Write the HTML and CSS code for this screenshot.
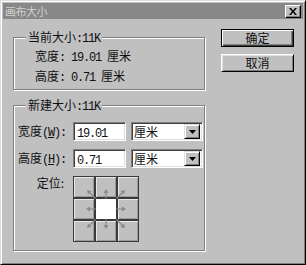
FILE: index.html
```html
<!DOCTYPE html>
<html>
<head>
  <title>画布大小</title>
  <link rel="stylesheet" href="styles.css">
</head>
<body>

  <div class="window">
    <div class="titlebar">
      <span class="title">画布大小</span>
      <span class="close">
        <svg width="8" height="7" viewBox="0 0 8 7"><path d="M0 0h2l2 2.5L6 0h2L5 3.5 8 7H6L4 4.5 2 7H0l3-3.5z" fill="#000"/></svg>
      </span>
    </div>

    <div class="main">
      <div class="groups">
        <div class="group current">
          <span class="legend">当前大小<span class="num">:11K</span></span>
          <div class="line">宽度<span class="num">: 19.01 </span>厘米</div>
          <div class="line">高度<span class="num">: 0.71 </span>厘米</div>
        </div>

        <div class="group newsize">
          <span class="legend">新建大小<span class="num">:11K</span></span>
          <div class="form">
            <label>宽度<span class="num">(<u>W</u>):</span></label>
            <div class="field"><span class="num">19.01</span></div>
            <div class="select"><span class="value">厘米</span><span class="drop"><svg width="7" height="4" viewBox="0 0 7 4"><path d="M0 0h7L3.5 4z" fill="#000"/></svg></span></div>

            <label>高度<span class="num">(<u>H</u>):</span></label>
            <div class="field"><span class="num">0.71</span></div>
            <div class="select"><span class="value">厘米</span><span class="drop"><svg width="7" height="4" viewBox="0 0 7 4"><path d="M0 0h7L3.5 4z" fill="#000"/></svg></span></div>

            <label class="top">定位:</label>
            <div class="anchor">
              <div class="cell"></div><div class="cell"></div><div class="cell"></div>
              <div class="cell"></div><div class="cell center"></div><div class="cell"></div>
              <div class="cell"></div><div class="cell"></div><div class="cell"></div>
              <svg class="arrows" width="66" height="66" viewBox="0 0 66 66">
                <defs>
                  <g id="up"><path d="M33 22.5V16" stroke="#8a8a8a" stroke-width="1.2"/><path d="M33 13l-2.5 4h5z" fill="#8a8a8a"/></g>
                  <g id="diag"><path d="M22.5 22.5L16 16" stroke="#8a8a8a" stroke-width="1.2"/><path d="M14 14l1 4.5 3.5-3.5z" fill="#8a8a8a"/></g>
                </defs>
                <use href="#up"/>
                <use href="#up" transform="rotate(90 33 33)"/>
                <use href="#up" transform="rotate(180 33 33)"/>
                <use href="#up" transform="rotate(270 33 33)"/>
                <use href="#diag"/>
                <use href="#diag" transform="rotate(90 33 33)"/>
                <use href="#diag" transform="rotate(180 33 33)"/>
                <use href="#diag" transform="rotate(270 33 33)"/>
              </svg>
            </div>
          </div>
        </div>
      </div>

      <div class="buttons">
        <button class="btn default">确定</button>
        <button class="btn">取消</button>
      </div>
    </div>
  </div>

</body>
</html>
```

FILE: styles.css
```css
html, body {
  margin: 0;
  padding: 0;
  background: #c0c0c0;
}
body {
  font-family: "Noto Sans CJK SC", sans-serif;
  font-size: 12px;
  color: #111;
}
.window {
  width: 306px;
  height: 265px;
  box-sizing: border-box;
  border: 1px solid;
  border-color: #dfdfdf #000 #000 #dfdfdf;
  box-shadow: inset 1px 1px #fff, inset -1px -1px #808080;
  padding: 2px;
}
.titlebar {
  height: 16px;
  background: #888;
  display: flex;
  align-items: center;
  justify-content: space-between;
  padding: 0 2px 0 2px;
  color: #d2d2d2;
  line-height: 16px;
}
.title {
  font-size: 11px;
  letter-spacing: -0.5px;
}
.close {
  width: 16px;
  height: 13px;
  box-sizing: border-box;
  background: #c0c0c0;
  border: 1px solid;
  border-color: #fff #000 #000 #fff;
  box-shadow: inset -1px -1px #808080;
  display: flex;
  align-items: center;
  justify-content: center;
}
.main {
  display: flex;
  gap: 16px;
  padding: 10px 0 0 10px;
}
.groups {
  display: flex;
  flex-direction: column;
  gap: 15px;
  padding-top: 8px;
}
.group {
  position: relative;
  width: 192px;
  box-sizing: border-box;
  border: 1px solid #808080;
  box-shadow: inset 1px 1px #fff, 1px 1px #fff;
}
.current {
  height: 53px;
  padding: 9px 0 0 21px;
}
.newsize {
  height: 146px;
  padding: 16px 0 0 4px;
}
.legend {
  position: absolute;
  top: -8px;
  left: 12px;
  padding: 0 2px;
  line-height: 14px;
  background: #c0c0c0;
}
.num {
  font-family: "Liberation Mono", monospace;
  letter-spacing: -1.2px;
}
.line {
  line-height: 17px;
}
.form {
  display: grid;
  grid-template-columns: 50px 53px 72px;
  column-gap: 5px;
  row-gap: 8px;
  align-items: center;
}
.form label {
  white-space: nowrap;
  line-height: 14px;
}
.form label.top {
  align-self: start;
  text-align: right;
  padding-right: 4px;
}
.field {
  height: 19px;
  box-sizing: border-box;
  background: #fff;
  border: 1px solid;
  border-color: #808080 #fff #fff #808080;
  box-shadow: inset 1px 1px #404040, inset -1px -1px #dfdfdf;
  padding: 0 3px;
  line-height: 17px;
}
.select {
  height: 19px;
  box-sizing: border-box;
  background: #fff;
  border: 1px solid;
  border-color: #808080 #fff #fff #808080;
  box-shadow: inset 1px 1px #404040, inset -1px -1px #dfdfdf;
  padding: 2px;
  display: flex;
  justify-content: space-between;
  align-items: center;
}
.select .value {
  line-height: 15px;
}
.drop {
  width: 16px;
  height: 15px;
  box-sizing: border-box;
  background: #c0c0c0;
  border: 1px solid;
  border-color: #dfdfdf #000 #000 #dfdfdf;
  box-shadow: inset 1px 1px #fff, inset -1px -1px #808080;
  display: flex;
  align-items: center;
  justify-content: center;
}
.anchor {
  grid-column: 2 / 4;
  position: relative;
  display: grid;
  grid-template-columns: repeat(3, 22px);
  grid-template-rows: repeat(3, 22px);
  width: 66px;
}
.cell {
  box-sizing: border-box;
  border: 1px solid #3a3a3a;
  background: #c0c0c0;
  box-shadow: inset 1px 1px #e8e8e8, inset -1px -1px #9a9a9a;
}
.cell.center {
  background: #fff;
  box-shadow: none;
}
.arrows {
  position: absolute;
  left: 0;
  top: 0;
}
.buttons {
  display: flex;
  flex-direction: column;
  gap: 7px;
}
.btn {
  width: 73px;
  height: 18px;
  box-sizing: border-box;
  padding: 0;
  font-family: "Noto Sans CJK SC", sans-serif;
  font-size: 12px;
  color: #111;
  line-height: 14px;
  background: #c0c0c0;
  border: 1px solid;
  border-color: #fff #000 #000 #fff;
  box-shadow: inset 1px 1px #dfdfdf, inset -1px -1px #808080;
}
.btn.default {
  border-color: #000;
  box-shadow: inset 1px 1px #fff, inset -1px -1px #404040, inset -2px -2px #808080;
}
```
